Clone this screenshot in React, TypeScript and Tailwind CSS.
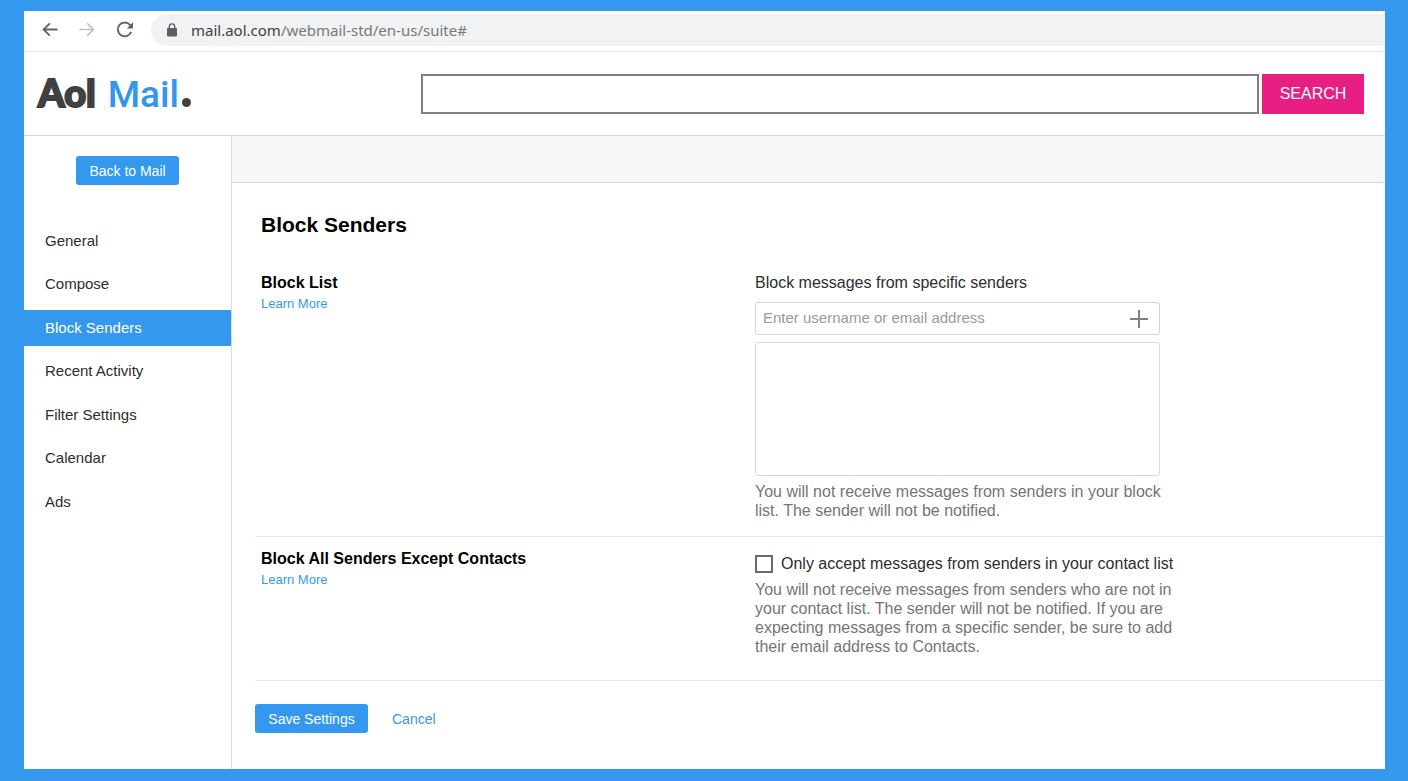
import { useState } from 'react';
import type { ReactNode } from 'react';

const navItems = [
  'General',
  'Compose',
  'Block Senders',
  'Recent Activity',
  'Filter Settings',
  'Calendar',
  'Ads',
];

const BrowserBar = () => (
  <div className="flex h-[41px] items-start border-b border-[#e4e5e6] pl-[18px] pt-[3px]">
    <div className="flex h-8 shrink-0 items-center gap-[21px] text-[#5f6368]">
      <button type="button" aria-label="Back">
        <svg className="h-4 w-4" viewBox="0 0 16 16" fill="none" stroke="currentColor" strokeWidth="1.8">
          <path d="M15.5 7.5H1.8M7.8 1.3L1.6 7.5l6.2 6.2" />
        </svg>
      </button>
      <button type="button" aria-label="Forward" className="text-[#bcbec0]">
        <svg className="h-4 w-4" viewBox="0 0 16 16" fill="none" stroke="currentColor" strokeWidth="1.6">
          <path d="M.5 7.5h13.7M8.2 1.3L14.4 7.5l-6.2 6.2" />
        </svg>
      </button>
      <button type="button" aria-label="Reload">
        <svg className="h-[18px] w-[18px]" viewBox="0 0 18 18" fill="none" stroke="currentColor" strokeWidth="1.9">
          <path d="M15.2 10.9A6.9 6.9 0 1 1 14 3.9l1.8 1.9" />
          <path d="M17 1.2v6.2h-6.2z" fill="currentColor" stroke="none" />
        </svg>
      </button>
    </div>
    <div className="ml-[17px] flex h-8 min-w-0 flex-1 items-center gap-[14px] rounded-l-full bg-[#f0f2f3] pl-4">
      <svg className="h-[14px] w-[10px] shrink-0" viewBox="0 0 10 14">
        <rect x="0" y="5" width="10" height="8.5" rx="1" fill="#5b5f64" />
        <path d="M2.3 5.5V3.6a2.7 2.7 0 0 1 5.4 0v1.9" fill="none" stroke="#5b5f64" strokeWidth="1.4" />
      </svg>
      <span className="truncate font-['Noto_Sans',sans-serif] text-[15px] leading-6 text-[#75797d]">
        <span className="text-[#3c4043]">mail.aol.com</span>/webmail-std/en-us/suite#
      </span>
    </div>
  </div>
);

const Header = () => (
  <header className="flex h-[84px] items-center border-b border-[#d8d8d8] pl-[14px] pr-[21px]">
    <a href="#" className="flex w-[383px] shrink-0 items-baseline text-[38px] leading-[42px] text-[#404040]">
      <span className="font-['Lato',sans-serif] font-black [-webkit-text-stroke:2px_#404040]">Aol</span>
      <span className="ml-3 font-['Roboto',sans-serif] text-[37px] font-medium text-[#3396ee]">Mail</span>
      <span className="ml-[3px] h-[9px] w-[9px] rounded-full bg-[#404040]" />
    </a>
    <form className="flex flex-1 gap-[3px]" onSubmit={(e) => e.preventDefault()}>
      <input
        type="search"
        aria-label="Search mail"
        className="h-10 min-w-0 flex-1 border-2 border-[#808080] bg-white px-3 text-base outline-none"
      />
      <button type="submit" className="h-10 w-[102px] bg-[#e91e83] text-base text-white">
        SEARCH
      </button>
    </form>
  </header>
);

const Sidebar = () => (
  <aside className="flex w-[208px] shrink-0 flex-col border-r border-[#dcdcdc] pt-5">
    <button type="button" className="h-[29px] w-[103px] self-center rounded-[3px] bg-[#3498ee] text-sm text-white">
      Back to Mail
    </button>
    <nav className="mt-[38px] flex h-[297px] flex-col justify-between">
      {navItems.map((item) => (
        <a
          key={item}
          href="#"
          className={`flex h-9 items-center pl-[21px] text-[15px] ${
            item === 'Block Senders' ? 'bg-[#3498ee] text-white' : 'text-[#2d2d2d]'
          }`}
        >
          {item}
        </a>
      ))}
    </nav>
  </aside>
);

const SettingsRow = ({ title, className, children }: { title: string; className: string; children: ReactNode }) => (
  <section className={`grid grid-cols-[494px_1fr] border-b border-[#e6e6e6] pl-[6px] ${className}`}>
    <div>
      <h2 className="text-base font-bold leading-5 text-black">{title}</h2>
      <a href="#" className="block text-[13px] leading-[22px] text-[#3498ee]">
        Learn More
      </a>
    </div>
    <div>{children}</div>
  </section>
);

export default function App() {
  const [sender, setSender] = useState('');
  const [blocked, setBlocked] = useState<string[]>([]);
  const [contactsOnly, setContactsOnly] = useState(false);

  const addSender = () => {
    if (!sender.trim()) return;
    setBlocked([...blocked, sender.trim()]);
    setSender('');
  };

  return (
    <div className="flex min-h-screen flex-col bg-[#3498ee] pb-3 pl-6 pr-[23px] pt-[11px] font-['Liberation_Sans',Arial,sans-serif]">
      <div className="flex flex-1 flex-col bg-white">
        <BrowserBar />
        <Header />
        <div className="flex flex-1">
          <Sidebar />
          <main className="min-w-0 flex-1">
            {/* Empty toolbar strip */}
            <div className="h-[47px] border-b border-[#d8d8d8] bg-[#f6f6f6]" />

            <div className="pl-[23px]">
              <h1 className="pl-[6px] pt-7 text-[21px] font-bold leading-7 text-black">Block Senders</h1>

              <SettingsRow title="Block List" className="pb-4 pt-[34px]">
                <label htmlFor="sender" className="block text-base leading-5 text-[#2d2d2d]">
                  Block messages from specific senders
                </label>
                <div className="mt-[9px] flex h-[33px] w-[405px] items-center rounded-[3px] border border-[#d4d4d4] pl-[7px] pr-[11px]">
                  <input
                    id="sender"
                    type="text"
                    value={sender}
                    onChange={(e) => setSender(e.target.value)}
                    placeholder="Enter username or email address"
                    className="min-w-0 flex-1 text-[15px] text-[#2d2d2d] outline-none placeholder:text-[#999999]"
                  />
                  <button type="button" aria-label="Add sender" onClick={addSender}>
                    <svg className="h-[18px] w-[18px]" viewBox="0 0 18 18" stroke="#808080" strokeWidth="2">
                      <path d="M9 0v18M0 9h18" />
                    </svg>
                  </button>
                </div>
                <ul className="mt-[7px] h-[134px] w-[405px] overflow-auto rounded-[3px] border border-[#d9d9d9] p-2 text-[15px]">
                  {blocked.map((name) => (
                    <li key={name}>{name}</li>
                  ))}
                </ul>
                <p className="mt-[6px] max-w-[420px] text-base leading-[19px] text-[#757575]">
                  You will not receive messages from senders in your block list. The sender will not be notified.
                </p>
              </SettingsRow>

              <SettingsRow title="Block All Senders Except Contacts" className="pb-6 pt-3">
                <label className="mt-[5px] flex items-center gap-2 text-base leading-5 text-[#2d2d2d]">
                  <input
                    type="checkbox"
                    checked={contactsOnly}
                    onChange={(e) => setContactsOnly(e.target.checked)}
                    className="h-[18px] w-[18px] shrink-0 appearance-none border-2 border-[#6b6b6b] checked:bg-[#3498ee]"
                  />
                  Only accept messages from senders in your contact list
                </label>
                <p className="mt-[6px] max-w-[420px] text-base leading-[19px] text-[#757575]">
                  You will not receive messages from senders who are not in your contact list. The sender will not be
                  notified. If you are expecting messages from a specific sender, be sure to add their email address to
                  Contacts.
                </p>
              </SettingsRow>

              <div className="flex items-center gap-6 pb-9 pt-[23px] text-sm">
                <button type="button" className="h-[29px] w-[113px] rounded-[3px] bg-[#3498ee] text-white">
                  Save Settings
                </button>
                <button type="button" className="text-[#3498ee]">
                  Cancel
                </button>
              </div>
            </div>
          </main>
        </div>
      </div>
    </div>
  );
}
